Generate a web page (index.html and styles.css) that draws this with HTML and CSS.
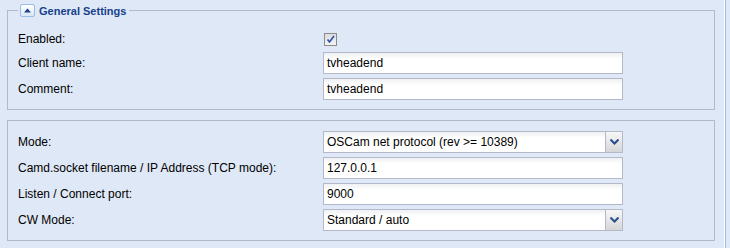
FILE: index.html
```html
<!DOCTYPE html>
<html>
<head>
<meta charset="utf-8">
<link rel="stylesheet" href="styles.css">
</head>
<body>
<div class="page">
  <fieldset class="group">
    <legend class="legend">
      <span class="toggle"><svg width="13" height="11" viewBox="0 0 13 11"><path d="M3 7.5 L6.5 3.5 L10 7.5 Z" fill="#15428b"/></svg></span>
      <span class="legend-text">General Settings</span>
    </legend>
    <div class="row row-check">
      <label class="lbl">Enabled:</label>
      <span class="checkbox"><svg width="11" height="11" viewBox="0 0 11 11"><path d="M2.5 5.5 L4.5 8 L9 2" fill="none" stroke="#2b4fb0" stroke-width="1.6"/></svg></span>
    </div>
    <div class="row">
      <label class="lbl">Client name:</label>
      <div class="field"><span class="val">tvheadend</span></div>
    </div>
    <div class="row">
      <label class="lbl">Comment:</label>
      <div class="field"><span class="val">tvheadend</span></div>
    </div>
  </fieldset>
  <fieldset class="group group2">
    <div class="row">
      <label class="lbl">Mode:</label>
      <div class="field combo"><span class="val">OSCam net protocol (rev &gt;= 10389)</span><span class="trigger"><svg width="9" height="6" viewBox="0 0 9 6"><path d="M0.5 0.5 L4.5 4.5 L8.5 0.5" fill="none" stroke="#2a4d8f" stroke-width="2"/></svg></span></div>
    </div>
    <div class="row">
      <label class="lbl">Camd.socket filename / IP Address (TCP mode):</label>
      <div class="field"><span class="val">127.0.0.1</span></div>
    </div>
    <div class="row">
      <label class="lbl">Listen / Connect port:</label>
      <div class="field"><span class="val">9000</span></div>
    </div>
    <div class="row">
      <label class="lbl">CW Mode:</label>
      <div class="field combo"><span class="val">Standard / auto</span><span class="trigger"><svg width="9" height="6" viewBox="0 0 9 6"><path d="M0.5 0.5 L4.5 4.5 L8.5 0.5" fill="none" stroke="#2a4d8f" stroke-width="2"/></svg></span></div>
    </div>
  </fieldset>
</div>
</body>
</html>
```
FILE: styles.css
```css
html, body {
  margin: 0;
  padding: 0;
  background: #dfe8f6;
}
body {
  font-family: "Liberation Sans", Arial, sans-serif;
  font-size: 12px;
  color: #000;
}
.page {
  box-sizing: border-box;
  width: 726px;
  height: 248px;
  padding: 4px 0 0 7px;
  border-right: 1px solid #99bbe8;
  box-shadow: inset -1px 0 #ffffff;
}
.group {
  box-sizing: border-box;
  width: 708px;
  margin: 0;
  padding: 0 10px 9px 10px;
  border: 1px solid #b5b8c8;
  min-width: 0;
}
.legend {
  display: flex;
  align-items: center;
  height: 13px;
  padding: 0 3px 0 2px;
  margin: 0;
}
.toggle {
  box-sizing: border-box;
  width: 15px;
  height: 13px;
  border: 1px solid #99bbe8;
  border-radius: 2px;
  background: linear-gradient(#ffffff, #dbe6f5);
  display: flex;
  align-items: center;
  justify-content: center;
}
.toggle svg { display: block; }
.legend-text {
  margin-left: 4px;
  font-weight: bold;
  font-size: 11px;
  color: #15428b;
}
.row {
  display: flex;
  align-items: center;
  height: 22px;
  margin-top: 4px;
}
.row-check {
  height: 20px;
  margin-top: 12px;
  margin-bottom: -1px;
}
.group2 {
  margin-top: 10px;
  padding-top: 6px;
}
.lbl {
  width: 305px;
  flex: none;
}
.checkbox {
  box-sizing: border-box;
  width: 13px;
  height: 13px;
  margin-left: 1px;
  border: 1px solid #8c8c8c;
  background: linear-gradient(#dcdcdc, #f4f4f4);
  display: flex;
  align-items: center;
  justify-content: center;
}
.checkbox svg { display: block; }
.field {
  box-sizing: border-box;
  width: 300px;
  height: 22px;
  border: 1px solid #b5b8c8;
  background: linear-gradient(#eef0f2 0px, #ffffff 6px);
  display: flex;
  align-items: center;
  padding-left: 3px;
}
.val {
  flex: 1;
  white-space: nowrap;
}
.combo {
  padding-right: 0;
}
.trigger {
  box-sizing: border-box;
  width: 17px;
  height: 20px;
  border-left: 1px solid #b5b8c8;
  background: linear-gradient(#f7f7f7, #d6d6d6);
  display: flex;
  align-items: center;
  justify-content: center;
}
.trigger svg { display: block; }
```
